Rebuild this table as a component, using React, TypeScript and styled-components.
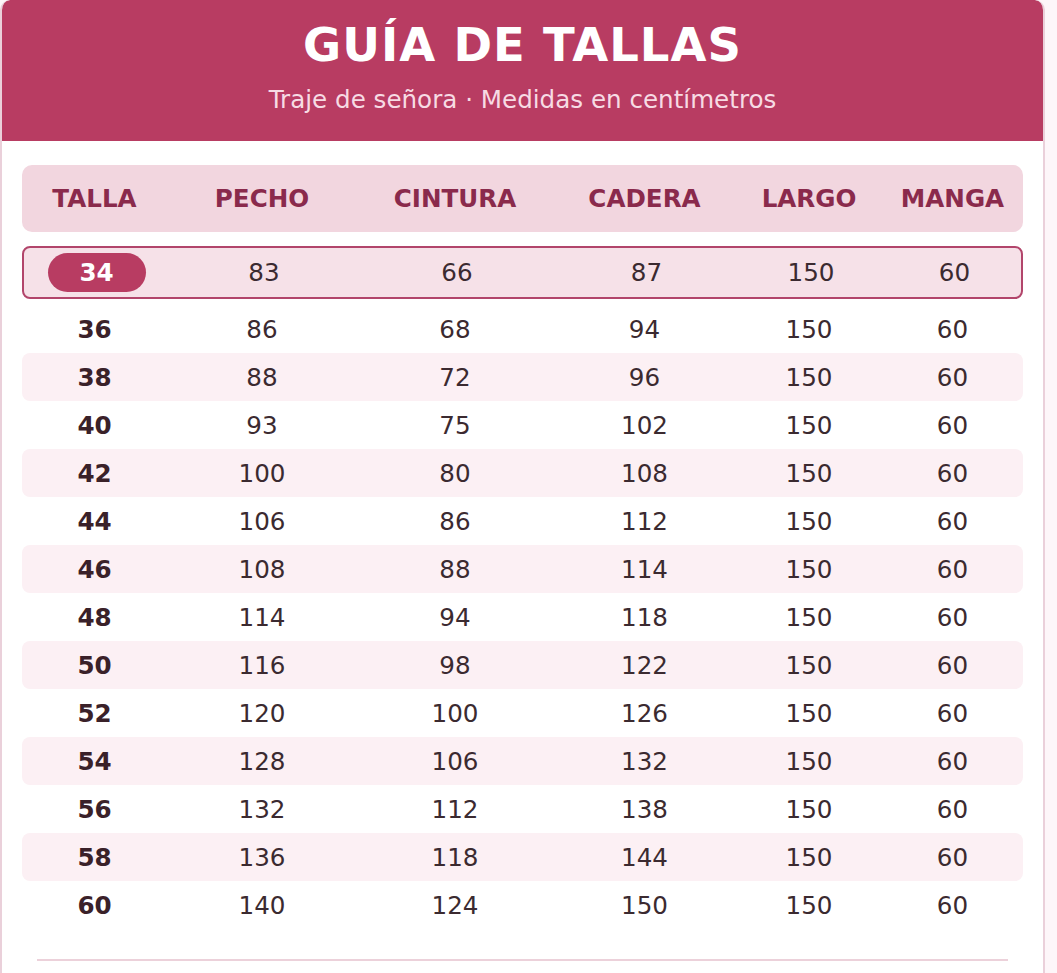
import React from "react";
import styled, { createGlobalStyle } from "styled-components";

const GlobalStyle = createGlobalStyle`
  html, body {
    margin: 0;
    padding: 0;
    background: #fdf6f9;
  }
  body {
    font-family: "DejaVu Sans", "Noto Sans", sans-serif;
  }
`;

const Card = styled.div`
  width: 1045px;
  box-sizing: border-box;
  background: #ffffff;
  border: 2px solid #ead0da;
  border-top: none;
  border-radius: 10px 10px 0 0;
  overflow: hidden;
  height: 1000px;
`;

const Header = styled.header`
  background: #b83c62;
  height: 141px;
  box-sizing: border-box;
  padding-top: 16px;
  text-align: center;
  color: #ffffff;
  margin: 0 -2px;
  border-radius: 10px 10px 0 0;
`;

const Title = styled.h1`
  margin: 0;
  font-size: 46.5px;
  line-height: 58px;
  font-weight: 700;
  letter-spacing: 1px;
`;

const Subtitle = styled.p`
  margin: 11px 0 0;
  font-size: 24.6px;
  line-height: 30px;
  color: #f7dbe4;
`;

const Body = styled.div`
  padding: 24px 20px 0;
`;

const cols = "145px 190px 196px 183px 146px 141px";

const HeadRow = styled.div`
  display: grid;
  grid-template-columns: ${cols};
  align-items: center;
  height: 67px;
  background: #f2d6df;
  border-radius: 10px;
  margin-bottom: 14px;
`;

const HeadCell = styled.div`
  text-align: center;
  font-size: 24.6px;
  font-weight: 700;
  color: #8a2a4c;
`;

const Row = styled.div<{ $striped?: boolean; $active?: boolean }>`
  display: grid;
  grid-template-columns: ${cols};
  align-items: center;
  box-sizing: border-box;
  height: ${(p) => (p.$active ? "53px" : "48px")};
  margin-bottom: ${(p) => (p.$active ? "6px" : "0")};
  border-radius: 8px;
  background: ${(p) => (p.$active ? "#f6e1e8" : p.$striped ? "#fcf0f4" : "transparent")};
  border: ${(p) => (p.$active ? "2px solid #b2456b" : "none")};
`;

const Cell = styled.div`
  text-align: center;
  font-size: 24.6px;
  color: #3b2a30;
`;

const SizeCell = styled(Cell)`
  font-weight: 700;
  color: #3a2129;
`;

const Badge = styled.span`
  display: inline-flex;
  align-items: center;
  justify-content: center;
  width: 98px;
  height: 39px;
  border-radius: 20px;
  background: #b83c62;
  color: #ffffff;
  font-weight: 700;
  font-size: 24.6px;
`;

const Divider = styled.hr`
  margin: 30px 15px 0;
  border: none;
  border-top: 2px solid #ecd1da;
`;

const data: number[][] = [
  [34, 83, 66, 87, 150, 60],
  [36, 86, 68, 94, 150, 60],
  [38, 88, 72, 96, 150, 60],
  [40, 93, 75, 102, 150, 60],
  [42, 100, 80, 108, 150, 60],
  [44, 106, 86, 112, 150, 60],
  [46, 108, 88, 114, 150, 60],
  [48, 114, 94, 118, 150, 60],
  [50, 116, 98, 122, 150, 60],
  [52, 120, 100, 126, 150, 60],
  [54, 128, 106, 132, 150, 60],
  [56, 132, 112, 138, 150, 60],
  [58, 136, 118, 144, 150, 60],
  [60, 140, 124, 150, 150, 60],
];

const heads = ["TALLA", "PECHO", "CINTURA", "CADERA", "LARGO", "MANGA"];

export default function App() {
  return (
    <>
      <GlobalStyle />
      <Card>
        <Header>
          <Title>GUÍA DE TALLAS</Title>
          <Subtitle>Traje de señora · Medidas en centímetros</Subtitle>
        </Header>
        <Body>
          <HeadRow>
            {heads.map((h) => (
              <HeadCell key={h}>{h}</HeadCell>
            ))}
          </HeadRow>
          {data.map((r, i) => (
            <Row key={r[0]} $active={i === 0} $striped={i > 0 && i % 2 === 0}>
              <SizeCell>{i === 0 ? <Badge>{r[0]}</Badge> : r[0]}</SizeCell>
              {r.slice(1).map((v, j) => (
                <Cell key={j}>{v}</Cell>
              ))}
            </Row>
          ))}
          <Divider />
        </Body>
      </Card>
    </>
  );
}
